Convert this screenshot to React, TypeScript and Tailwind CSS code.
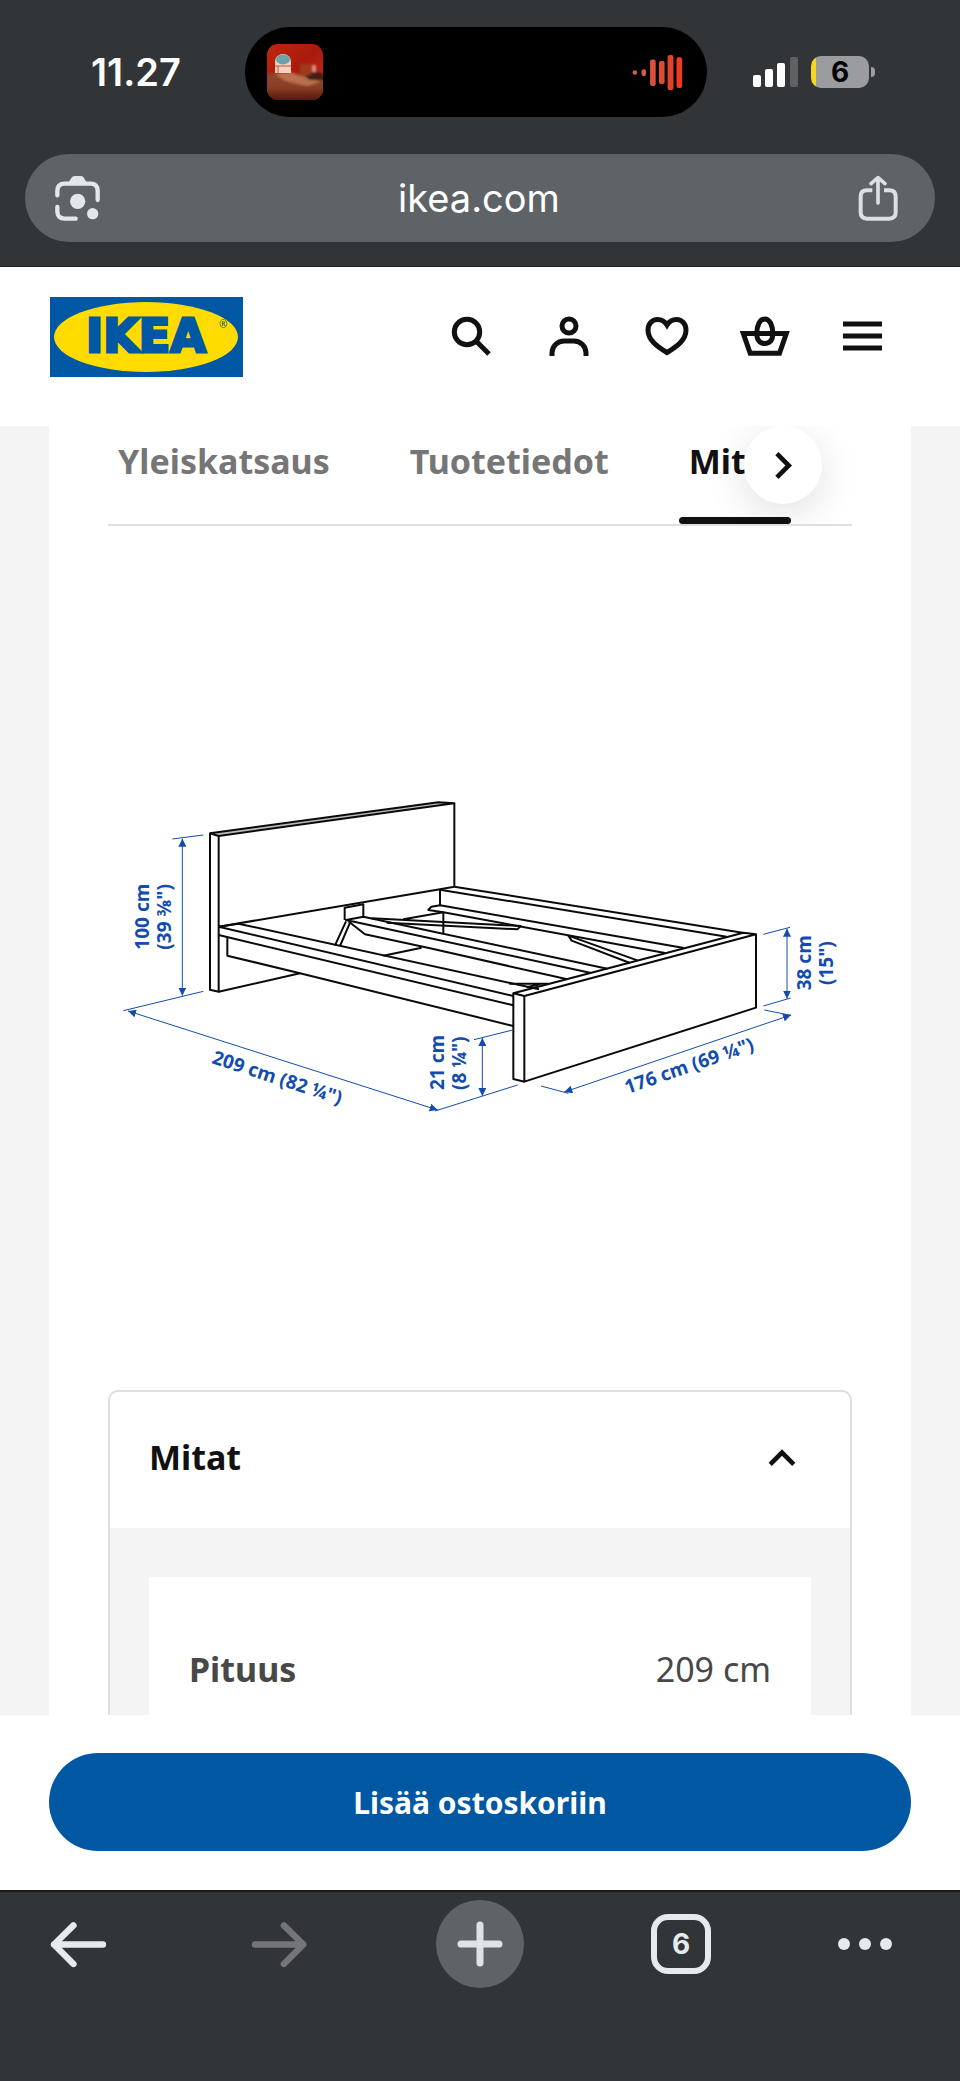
import type { ReactNode } from "react";

type IconButtonProps = {
  label: string;
  children: ReactNode;
};

const tabs = [
  { label: "Yleiskatsaus", active: false },
  { label: "Tuotetiedot", active: false },
  { label: "Mitat", active: true },
];

const measurements = [{ name: "Pituus", value: "209 cm" }];

function StatusBar() {
  return (
    <div className="grid grid-cols-[245fr_462fr_253fr] items-center pt-[27px]">
      <div className="pl-[91px] text-[38px] leading-none font-semibold text-white">
        11.27
      </div>
      <div className="flex h-[90px] items-center justify-between rounded-full bg-black pr-6 pl-[22px]">
        <AlbumArt />
        <svg viewBox="457 164 153 106" className="h-[35px] w-[51px]" aria-hidden="true">
          <rect x="458" y="210" width="14" height="14" rx="7" fill="#c9603f" />
          <rect x="485" y="207" width="14" height="21" rx="7" fill="#cf6048" />
          <rect x="511" y="178" width="17" height="80" rx="6" fill="#d9523a" />
          <rect x="538" y="182" width="17" height="70" rx="6" fill="#dd4c31" />
          <rect x="564" y="164" width="18" height="106" rx="6" fill="#e2412a" />
          <rect x="591" y="171" width="17" height="93" rx="6" fill="#f03a22" />
        </svg>
      </div>
      <div className="flex items-center gap-[13px] pl-[46px]">
        <svg viewBox="0 0 45 30" className="h-[30px] w-[45px]" aria-hidden="true">
          <rect x="0" y="18" width="8" height="12" rx="2" fill="#fff" />
          <rect x="12" y="12" width="8" height="18" rx="2" fill="#fff" />
          <rect x="24" y="6" width="8" height="24" rx="2" fill="#fff" />
          <rect x="37" y="0" width="8" height="30" rx="2" fill="#5f6063" />
        </svg>
        <div className="flex items-center gap-[2px]">
          <div className="flex h-8 w-[58px] items-center justify-center rounded-[10px] bg-[linear-gradient(90deg,#f9d423_5px,#9b9ca0_5px)] text-[28px] leading-none font-bold text-black">
            6
          </div>
          <div className="h-[10px] w-1 rounded-r-full bg-[#9b9ca0]" />
        </div>
      </div>
    </div>
  );
}

function AlbumArt() {
  return (
    <svg viewBox="0 0 56 56" className="size-14 rounded-[11px]" aria-hidden="true">
      <defs>
        <linearGradient id="wall" x1="0" y1="0" x2="1" y2="1">
          <stop offset="0" stopColor="#c3260f" />
          <stop offset="0.5" stopColor="#a81a0c" />
          <stop offset="1" stopColor="#c9341c" />
        </linearGradient>
        <linearGradient id="floor" x1="0" y1="0" x2="0" y2="1">
          <stop offset="0" stopColor="#8a4a30" />
          <stop offset="0.5" stopColor="#8a3d24" />
          <stop offset="1" stopColor="#4a150c" />
        </linearGradient>
        <filter id="soft">
          <feGaussianBlur stdDeviation="1" />
        </filter>
      </defs>
      <rect width="56" height="56" fill="url(#wall)" />
      <g filter="url(#soft)">
        <path d="M-2 31Q16 27 28 31L58 31V58H-2Z" fill="url(#floor)" />
        <path d="M8 30L24 28L34 32L54 38L40 42L18 37Z" fill="#b8704e" />
        <path d="M38 31Q46 24 58 31V36H42Z" fill="#451a12" />
        <rect x="33" y="20" width="11" height="11" fill="#9c3a1c" />
        <rect x="45" y="21" width="4" height="7" fill="#e08a80" />
      </g>
      <path d="M8 29V18A8 8 0 0 1 24 18V29Z" fill="#f3d3c0" />
      <ellipse cx="16" cy="15.500" rx="7" ry="5" fill="#69a3ab" />
      <path d="M11 29V22M8 22H24" stroke="#c9503c" strokeWidth="1" />
    </svg>
  );
}

function AddressBar() {
  return (
    <div className="mx-[25px] mt-[37px] flex h-[88px] items-center justify-between rounded-full bg-[#5e6367] pr-[37px] pl-[30px]">
      <button type="button" aria-label="Hae kameralla">
        <svg
          viewBox="165 525 135 135"
          className="size-[45px]"
          fill="none"
          stroke="#e3e6ea"
          strokeWidth="13"
          strokeLinecap="round"
        >
          <path d="M172 583V570Q172 548 194 548H271Q293 548 293 570V597" />
          <path d="M172 618V631Q172 653 194 653H227" />
          <path
            d="M203 548L214 531Q218 525 224 525H243Q249 525 252 531L262 548Z"
            fill="#e3e6ea"
            stroke="none"
          />
          <circle cx="233" cy="601" r="23" fill="#e3e6ea" stroke="none" />
          <circle cx="278" cy="638" r="17" fill="#e3e6ea" stroke="none" />
        </svg>
      </button>
      <span className="text-[38px] leading-none text-white">ikea.com</span>
      <button type="button" aria-label="Jaa">
        <svg
          viewBox="1135 526 120 138"
          className="h-[46px] w-10"
          fill="none"
          stroke="#dcdfe3"
          strokeWidth="12"
          strokeLinecap="round"
          strokeLinejoin="round"
        >
          <path
            d="M1178 572H1162Q1143 572 1143 591V638Q1143 657 1162 657H1229Q1248 657 1248 638V591Q1248 572 1229 572H1213"
            strokeLinecap="butt"
          />
          <path d="M1195 610V535M1174 552L1195 534L1216 552" strokeWidth="11" />
        </svg>
      </button>
    </div>
  );
}

function Logo() {
  return (
    <svg viewBox="0 0 193 80" className="h-20 w-[193px]" role="img" aria-label="IKEA">
      <rect width="193" height="80" fill="#0057a3" />
      <ellipse cx="96" cy="40" rx="92" ry="35" fill="#ffdb00" />
      <text
        x="96"
        y="55"
        textAnchor="middle"
        fontSize="46"
        fill="#0057a3"
        stroke="#0057a3"
        strokeWidth="3"
        className="font-['DejaVu_Sans'] font-bold"
      >
        IKEA
      </text>
      <text x="169" y="31" fontSize="10" fill="#0057a3" className="font-['Noto_Sans']">
        ®
      </text>
    </svg>
  );
}

function HeaderButton({ label, children }: IconButtonProps) {
  return (
    <button type="button" aria-label={label}>
      <svg
        viewBox="0 0 58 58"
        className="size-[58px]"
        fill="none"
        stroke="#111"
        strokeWidth="5"
      >
        {children}
      </svg>
    </button>
  );
}

function SiteHeader() {
  return (
    <header className="flex items-center justify-between bg-white pt-[30px] pr-[68px] pb-[49px] pl-[50px]">
      <a href="#">
        <Logo />
      </a>
      <nav className="flex gap-10">
        <HeaderButton label="Haku">
          <circle cx="25" cy="24" r="12.7" />
          <path d="M34 33L47 46" />
        </HeaderButton>
        <HeaderButton label="Kirjaudu">
          <circle cx="29" cy="18" r="7" />
          <path d="M12 48V45A12 12 0 0 1 24 33H34A12 12 0 0 1 46 45V48" />
        </HeaderButton>
        <HeaderButton label="Suosikit">
          <path d="M29 17C26.500 13 23 11.500 19.500 11.500C14 11.500 10 16 10 22C10 32 19 38.500 29 44.500C39 38.500 48 32 48 22C48 16 44 11.500 38.500 11.500C35 11.500 31.500 13 29 17Z" />
        </HeaderButton>
        <HeaderButton label="Ostoskori">
          <path d="M7.300 25.500H50.300L43.500 45.300H14.200Z" />
          <path d="M28.800 11C33.800 11 36.800 17.500 36.800 25.500C36.800 32 33.800 35.500 28.800 35.500C23.800 35.500 20.800 32 20.800 25.500C20.800 17.500 23.800 11 28.800 11Z" />
        </HeaderButton>
        <HeaderButton label="Valikko">
          <path d="M9 16H48M9 28H48M9 40H48" />
        </HeaderButton>
      </nav>
    </header>
  );
}

function TabBar() {
  return (
    <div className="relative overflow-hidden border-b-2 border-[#dfdfdf]">
      <div role="tablist" className="flex gap-[60px]">
        {tabs.map((tab) => (
          <button
            key={tab.label}
            type="button"
            role="tab"
            aria-selected={tab.active}
            className={
              tab.active
                ? "relative px-[10px] pt-[10px] pb-[37px] text-[34px] leading-[51px] font-bold text-[#111]"
                : "px-[10px] pt-[10px] pb-[37px] text-[34px] leading-[51px] font-bold text-[#767676]"
            }
          >
            {tab.label}
            {tab.active && (
              <span className="absolute inset-x-0 bottom-0 h-[7px] rounded-full bg-[#111]" />
            )}
          </button>
        ))}
      </div>
      <button
        type="button"
        aria-label="Seuraava"
        className="absolute top-0 right-[30px] flex size-[78px] items-center justify-center rounded-full bg-white shadow-[0_10px_40px_rgba(0,0,0,0.12)]"
      >
        <svg
          viewBox="885 548 56 88"
          className="h-[29px] w-[19px]"
          fill="none"
          stroke="#111"
          strokeWidth="14"
        >
          <path d="M893 556L929 592L893 628" />
        </svg>
      </button>
    </div>
  );
}

function BedDrawing() {
  return (
    <svg
      viewBox="-6 -582 2232 2232"
      className="my-[60px] block w-full"
      role="img"
      aria-label="Sängynrungon mitat"
    >
      <defs>
        <marker
          id="arrow"
          viewBox="0 0 24 24"
          refX="24"
          refY="12"
          markerWidth="24"
          markerHeight="24"
          markerUnits="userSpaceOnUse"
          orient="auto-start-reverse"
        >
          <path d="M0 0L24 12L0 24Z" fill="#134cae" />
        </marker>
      </defs>

      <g fill="none" stroke="#0a0a0a" strokeWidth="6" strokeLinejoin="round">
        {/* headboard */}
        <path d="M300 160L985 67L1033 70L326 168Z" fill="#bbb" />
        <path d="M300 160V629L326 635V168M1033 70V320M326 440L990 328L1033 320" />
        <path d="M326 635L570 580" />
        {/* near rail */}
        <path d="M326 440L385 431L1287 628M326 440L1210 648M326 465L1210 676" />
        <path d="M352 472V527L570 580L1210 738" />
        {/* far rail */}
        <path d="M1033 320L1898 458M990 329L1850 470M990 328V378" />
        <path d="M1722 504L990 376L964 380L955 390L1000 397L1665 519M1000 397V460" />
        {/* centre beam and braces */}
        <path d="M704 420V383L760 373V410" />
        <path d="M1492 566L760 410L708 420L1440 578M715 424L765 463L960 505L1372 598" />
        <path d="M708 424L675 496M720 428L690 498" />
        <path d="M785 415L1232 438L1222 448L830 428M880 418L1000 397" />
        <path d="M820 527L935 503" />
        <path d="M1582 541L1375 467L1385 482L1560 549" />
        <path d="M1198 611H1315M1250 622L1290 613" />
        {/* footboard */}
        <path d="M1210 640L1900 458L1938 463L1243 648Z" />
        <path d="M1210 640V897L1243 905V648M1243 905L1938 683V463" />
      </g>

      <g fill="none" stroke="#134cae" strokeWidth="3">
        <path d="M187 177L280 165M40 692L280 634" />
        <path d="M975 993L1223 915M1092 779L1208 750" />
        <path d="M1960 463L2040 442M1960 678L2042 654" />
        <path d="M1293 918L1375 940M1963 690L2042 706" />
        <path d="M217 176V647" markerStart="url(#arrow)" markerEnd="url(#arrow)" />
        <path d="M54 693L983 990" markerStart="url(#arrow)" markerEnd="url(#arrow)" />
        <path d="M1117 774V948" markerStart="url(#arrow)" markerEnd="url(#arrow)" />
        <path d="M2031 446V656" markerStart="url(#arrow)" markerEnd="url(#arrow)" />
        <path d="M1363 936L2043 705" markerStart="url(#arrow)" markerEnd="url(#arrow)" />
      </g>

      <g fill="#134cae" fontSize="57" className="font-bold">
        <text transform="translate(118 509) rotate(-90)">100 cm</text>
        <text transform="translate(183 509) rotate(-90)">(39 ⅜")</text>
        <text transform="translate(303 849) rotate(18)">209 cm (82 ¼")</text>
        <text transform="translate(1001 930) rotate(-90)">21 cm</text>
        <text transform="translate(1068 930) rotate(-90)">(8 ¼")</text>
        <text transform="translate(1552 942) rotate(-19)">176 cm (69 ¼")</text>
        <text transform="translate(2103 631) rotate(-90)">38 cm</text>
        <text transform="translate(2170 615) rotate(-90)">(15")</text>
      </g>
    </svg>
  );
}

function MeasurementsPanel() {
  return (
    <section className="overflow-hidden rounded-t-[10px] border-2 border-b-0 border-[#dfdfdf]">
      <button
        type="button"
        aria-expanded="true"
        className="flex w-full items-center justify-between pt-10 pr-[54px] pb-[45px] pl-[39px] text-[34px] leading-[51px] font-bold text-[#111]"
      >
        Mitat
        <svg
          viewBox="863 272 84 55"
          className="h-[18px] w-7"
          fill="none"
          stroke="#111"
          strokeWidth="14"
        >
          <path d="M869 319L905 283L941 319" />
        </svg>
      </button>
      <div className="bg-[#f4f4f4] px-[39px] pt-[49px]">
        <dl className="bg-white px-10 pt-[67px] pb-5 text-[34px] leading-[51px] text-[#484848]">
          {measurements.map((item) => (
            <div key={item.name} className="flex justify-between">
              <dt className="font-bold">{item.name}</dt>
              <dd>{item.value}</dd>
            </div>
          ))}
        </dl>
      </div>
    </section>
  );
}

function BrowserToolbar() {
  return (
    <nav className="flex justify-between border-t-2 border-[#18191b] bg-[#323538] pt-2 pr-[34px] pb-[93px] pl-[34px]">
      <button
        type="button"
        aria-label="Takaisin"
        className="flex size-[88px] items-center justify-center"
      >
        <svg
          viewBox="148 602 170 140"
          className="h-[47px] w-[57px]"
          fill="none"
          stroke="#e6e9ed"
          strokeWidth="19"
          strokeLinecap="round"
          strokeLinejoin="round"
        >
          <path d="M306 672H160M218 615L160 672L218 730" />
        </svg>
      </button>
      <button
        type="button"
        aria-label="Eteenpäin"
        disabled
        className="flex size-[88px] items-center justify-center"
      >
        <svg
          viewBox="752 602 170 140"
          className="h-[47px] w-[57px]"
          fill="none"
          stroke="#747579"
          strokeWidth="19"
          strokeLinecap="round"
          strokeLinejoin="round"
        >
          <path d="M764 672H908M850 615L908 672L850 730" />
        </svg>
      </button>
      <button
        type="button"
        aria-label="Uusi välilehti"
        className="flex size-[88px] items-center justify-center rounded-full bg-[#5e6367]"
      >
        <svg
          viewBox="0 0 46 46"
          className="size-[46px]"
          stroke="#dfe2e6"
          strokeWidth="7"
          strokeLinecap="round"
        >
          <path d="M4 23H42M23 4V42" />
        </svg>
      </button>
      <button
        type="button"
        aria-label="Välilehdet"
        className="flex size-[88px] items-center justify-center"
      >
        <span className="flex size-[60px] items-center justify-center rounded-[17px] border-6 border-[#e6e9ed] font-['Inter'] text-[28px] leading-none font-bold text-[#e6e9ed]">
          6
        </span>
      </button>
      <button
        type="button"
        aria-label="Lisää"
        className="flex size-[88px] items-center justify-start gap-[9px]"
      >
        <span className="size-3 rounded-full bg-[#e6e9ed]" />
        <span className="size-3 rounded-full bg-[#e6e9ed]" />
        <span className="size-3 rounded-full bg-[#e6e9ed]" />
      </button>
    </nav>
  );
}

export default function App() {
  return (
    <div className="bg-[#323538] font-['Noto_Sans',sans-serif]">
      <div className="border-b border-[#1d1e20] pb-6 font-['Inter',sans-serif]">
        <StatusBar />
        <AddressBar />
      </div>
      <SiteHeader />
      <main className="bg-[#f4f4f4] px-[49px]">
        <div className="bg-white px-[59px]">
          <TabBar />
          <BedDrawing />
          <MeasurementsPanel />
        </div>
      </main>
      <div className="bg-white px-[49px] pt-[38px] pb-[39px]">
        <button
          type="button"
          className="flex h-[98px] w-full items-center justify-center rounded-full bg-[#0058a3] text-[30px] font-bold text-white"
        >
          Lisää ostoskoriin
        </button>
      </div>
      <BrowserToolbar />
    </div>
  );
}
